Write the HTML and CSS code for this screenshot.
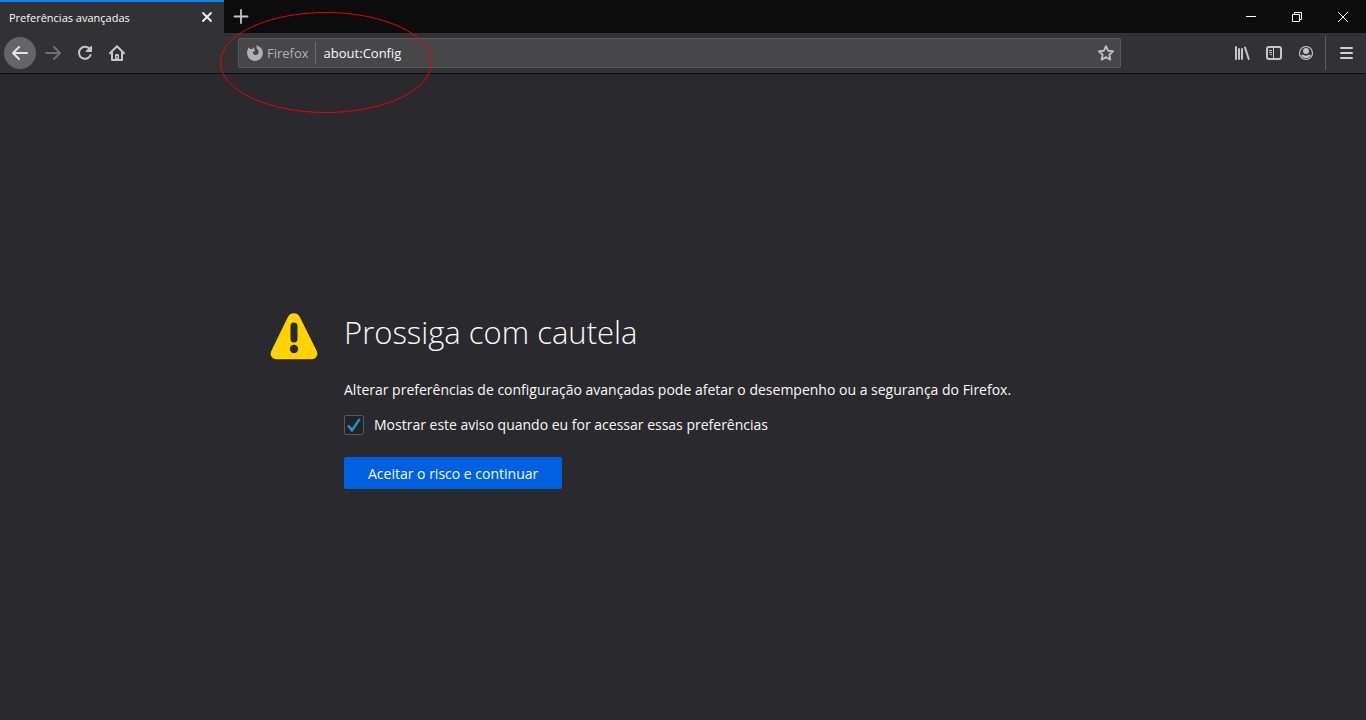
FILE: index.html
```html
<!DOCTYPE html>
<html lang="pt-BR">
<head>
<meta charset="utf-8">
<title>Preferências avançadas</title>
<link rel="stylesheet" href="styles.css">
</head>
<body>
<header class="browser">
  <div class="tabbar">
    <div class="tab">
      <span class="tab-title">Preferências avançadas</span>
      <button class="tab-close" aria-label="Fechar aba"><svg width="16" height="16" viewBox="0 0 16 16"><path d="M4 3l8 8M12 3l-8 8" stroke="#f4f4f5" stroke-width="1.8" stroke-linecap="round"/></svg></button>
    </div>
    <button class="new-tab" aria-label="Nova aba"><svg width="16" height="16" viewBox="0 0 16 16"><path d="M8 1v13M1.500 7.500h13" stroke="#c4c4c6" stroke-width="1.800" stroke-linecap="round"/></svg></button>
    <div class="window-controls">
      <button aria-label="Minimizar"><svg width="12" height="12" viewBox="0 0 12 12"><path d="M1 5.500h10" stroke="#fff"/></svg></button>
      <button aria-label="Restaurar"><svg width="12" height="12" viewBox="0 0 12 12"><path d="M1.500 3.500h7v7h-7zM3.500 3.500v-2h7v7h-2" fill="none" stroke="#fff"/></svg></button>
      <button aria-label="Fechar"><svg width="12" height="12" viewBox="0 0 12 12"><path d="M1 1l10 10M11 1L1 11" stroke="#fff"/></svg></button>
    </div>
  </div>
  <nav class="toolbar">
    <div class="tools">
      <button class="tool back" aria-label="Voltar"><svg width="16" height="16" viewBox="0 0 16 16"><path d="M15 8H1.500M7 2L1 8l6 6" fill="none" stroke="#e4e4e5" stroke-width="2" stroke-linecap="round" stroke-linejoin="round"/></svg></button>
      <button class="tool" aria-label="Avançar" disabled><svg width="16" height="16" viewBox="0 0 16 16"><path d="M1 8h13.500M9 2l6 6-6 6" fill="none" stroke="#707072" stroke-width="2" stroke-linecap="round" stroke-linejoin="round"/></svg></button>
      <button class="tool" aria-label="Recarregar"><svg width="16" height="16" viewBox="0 0 16 16"><path d="M12.800 4.200A6 6 0 1 0 13.600 10" fill="none" stroke="#c6c6c7" stroke-width="2" stroke-linecap="round"/><path d="M15 1.300v5.200a.6.6 0 0 1-.6.6H9.200c-.6 0-.8-.6-.4-1l5.200-5.200c.4-.4 1-.2 1 .4z" fill="#c6c6c7"/></svg></button>
      <button class="tool" aria-label="Página inicial"><svg width="16" height="16" viewBox="0 0 16 16"><path d="M1 8.300l7-7 7 7M3 7v8h10V7" fill="none" stroke="#c6c6c7" stroke-width="2" stroke-linecap="round" stroke-linejoin="round"/><path d="M6 15v-4.500C6 9.500 6.500 9 7.500 9h1c1 0 1.500.5 1.500 1.500V15z" fill="#c6c6c7"/><path d="M7.500 11h1v2h-1z" fill="#323234"/></svg></button>
    </div>
    <div class="urlbar">
      <span class="identity"><svg width="16" height="16" viewBox="0 0 16 16"><path d="M1.800 2.500l1.400 1.600 2-.2L7.300 2l-.1 2.600 1.200 1-2.400 1.300c-.6 1.400.2 2.700 1.900 3.100 2 .4 3.700-.8 3.700-2.900 0-1.800-.9-2.900-2-3.500.3-1.200 0-2.300-.6-3.300 1.500.3 2.700 1.100 3.400 2.200l.4-.8c2 1.600 3.200 3.900 3.100 6.600-.2 4.300-3.600 7.600-7.900 7.600S.2 12.600.1 8.300C0 6 .7 4 1.800 2.500z" fill="#b1b1b3"/></svg>Firefox</span>
      <input class="address" type="text" value="about:Config" aria-label="Endereço" spellcheck="false">
      <button class="star" aria-label="Adicionar aos favoritos"><svg width="16" height="16" viewBox="0 0 16 16"><path d="M8 1.200l2.100 4.500 4.900.6-3.600 3.400.9 4.900L8 12.200l-4.300 2.400.9-4.900L1 6.300l4.900-.6z" fill="none" stroke="#bdbdbf" stroke-width="1.900" stroke-linejoin="round"/></svg></button>
    </div>
    <div class="tools">
      <button class="tool" aria-label="Biblioteca"><svg width="16" height="16" viewBox="0 0 16 16"><path d="M2 2v12M5 4v10M8 4v10M11 2.500l3.700 11.500" stroke="#c6c6c7" stroke-width="2" stroke-linecap="round"/></svg></button>
      <button class="tool" aria-label="Painel lateral"><svg width="16" height="16" viewBox="0 0 16 16"><rect x="1" y="2" width="14" height="12" rx="2" fill="none" stroke="#c6c6c7" stroke-width="2"/><path d="M7.500 2v12M3 5.500h3M3 7.500h3M4 9.500h2" stroke="#c6c6c7"/></svg></button>
      <button class="tool" aria-label="Conta"><svg width="16" height="16" viewBox="0 0 16 16"><circle cx="8" cy="8" r="6.500" fill="none" stroke="#c6c6c7" stroke-width="1.200"/><circle cx="8" cy="6" r="3" fill="#c6c6c7"/><path d="M3.200 10.300c1-.7 2-.6 2.600-.2 1.300.8 3.100.8 4.400 0 .6-.4 1.600-.5 2.600.2-2 4-7.600 4-9.600 0z" fill="#c6c6c7"/></svg></button>
    </div>
    <button class="menu" aria-label="Abrir menu"><svg width="16" height="16" viewBox="0 0 16 16"><path d="M3 3h11M3 8h11M3 13h11" stroke="#d0d0d1" stroke-width="2" stroke-linecap="round"/></svg></button>
  </nav>
  <svg class="highlight" width="214" height="104" viewBox="0 0 214 104" aria-hidden="true"><ellipse cx="107" cy="51.500" rx="105.500" ry="50" fill="none" stroke="#f00000"/></svg>
</header>
<main class="page">
  <section class="warning">
    <svg class="warning-icon" width="48" height="48" viewBox="0 0 48 48" aria-hidden="true"><path d="M18 4.700C20.400.1 27.300.1 29.700 4.700l17 34.300c2 4-.7 8.200-5 8.200H6.300C2 47.200-.7 43 1.300 39z" fill="#ffd300"/><path d="M24 14v13" stroke="#2a2a2e" stroke-width="7" stroke-linecap="round"/><circle cx="24" cy="37" r="4.200" fill="#2a2a2e"/></svg>
    <div class="warning-body">
      <h1>Prossiga com cautela</h1>
      <p>Alterar preferências de configuração avançadas pode afetar o desempenho ou a segurança do Firefox.</p>
      <div class="option">
        <input id="show-warning" type="checkbox" checked>
        <label for="show-warning">Mostrar este aviso quando eu for acessar essas preferências</label>
      </div>
      <button class="accept">Aceitar o risco e continuar</button>
    </div>
  </section>
</main>
</body>
</html>
```
FILE: styles.css
```css
* { box-sizing: border-box; }
body {
  margin: 0;
  min-height: 100vh;
  display: flex;
  flex-direction: column;
  background: #2a2a2e;
  color: #f9f9fa;
  font-family: "Open Sans", "Noto Sans", sans-serif;
}
button {
  display: flex;
  align-items: center;
  justify-content: center;
  padding: 0;
  border: 0;
  background: none;
  color: inherit;
  font: inherit;
}
svg { display: block; flex: none; }

.browser { position: relative; }
.tabbar { display: flex; height: 33px; background: #0c0c0d; }
.tab {
  display: flex;
  align-items: center;
  justify-content: space-between;
  width: 224px;
  padding: 0 9px;
  border-top: 2px solid #0a84ff;
  background: #323234;
}
.tab-title { font-size: 11px; }
.new-tab { width: 34px; }
.window-controls { display: flex; margin-left: auto; }
.window-controls button { width: 46px; }

.toolbar {
  display: flex;
  align-items: center;
  height: 41px;
  padding-left: 4px;
  border-bottom: 1px solid #0c0c0d;
  background: #323234;
}
.tools { display: flex; }
.tool { width: 32px; height: 32px; }
.back { margin-right: 1px; border-radius: 50%; background: #656567; }
.urlbar {
  display: flex;
  flex: 1;
  align-items: center;
  height: 30px;
  margin: 0 105px;
  border: 1px solid #5a5a5c;
  border-radius: 2px;
  background: #474749;
  font-size: 13px;
}
.identity {
  display: flex;
  align-items: center;
  gap: 4px;
  height: 22px;
  padding: 0 6px 0 8px;
  border-right: 1px solid #6b6b6d;
  color: #b1b1b3;
}
.address {
  flex: 1;
  min-width: 0;
  padding: 0 8px;
  border: 0;
  outline: 0;
  background: none;
  color: #f9f9fa;
  font: inherit;
}
.star { width: 28px; height: 28px; }
.menu {
  width: 41px;
  height: 34px;
  margin-left: 3px;
  border-left: 1px solid #5c5c5e;
}
.highlight { position: absolute; left: 219px; top: 11px; pointer-events: none; }

.page {
  display: flex;
  flex: 1;
  align-items: center;
  justify-content: center;
}
.warning { display: flex; gap: 26px; padding-right: 74px; }
.warning-icon { margin-top: 7px; }
.warning-body { width: 678px; }
h1 {
  margin: 4px 0 23px;
  font-size: 31px;
  font-weight: 300;
  line-height: 46px;
}
p { margin: 0 0 11px; font-size: 14px; line-height: 24px; }
.option {
  display: flex;
  align-items: center;
  gap: 10px;
  margin-bottom: 20px;
  font-size: 14px;
  line-height: 24px;
}
.option input {
  appearance: none;
  display: grid;
  place-items: center;
  width: 20px;
  height: 20px;
  margin: 0;
  border: 1px solid #58585b;
  border-radius: 2px;
  background: #232327;
}
.option input:checked::before {
  content: "";
  width: 14px;
  height: 14px;
  background: #1f93cf;
  clip-path: polygon(0 58%, 14% 48%, 36% 72%, 84% 2%, 98% 10%, 40% 98%, 32% 98%);
}
.accept {
  height: 32px;
  padding: 0 24px;
  border-radius: 2px;
  background: #0060df;
  font-size: 14px;
}
```
